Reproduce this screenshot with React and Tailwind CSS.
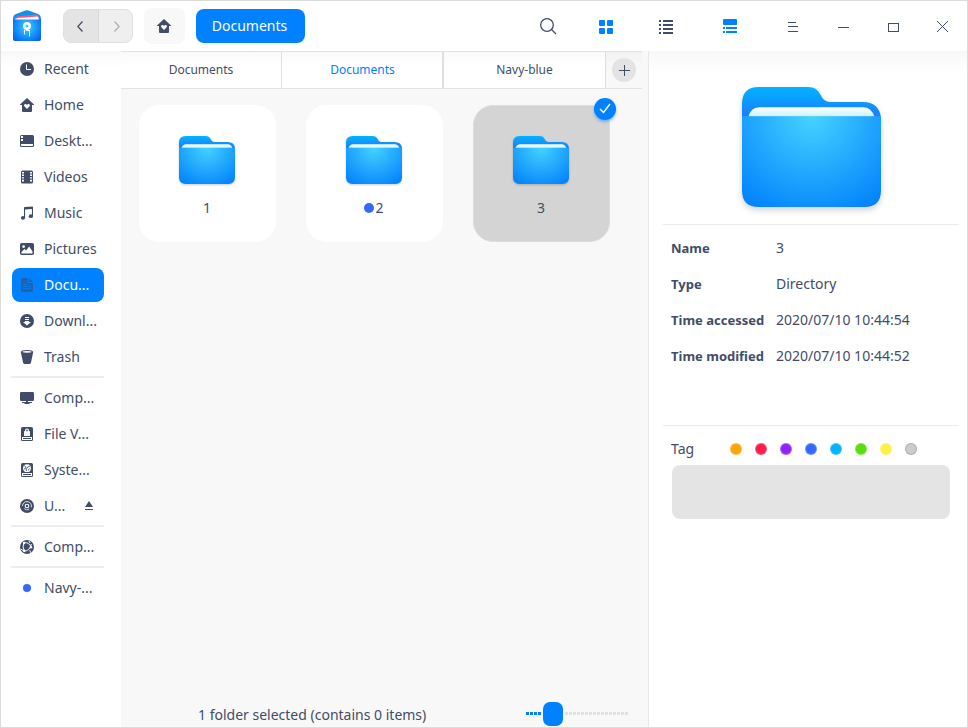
import React from "react";

const INK = "#414d68";

function Svg({ children, className = "" }) {
  return (
    <svg width="14" height="14" viewBox="0 0 14 14" fill={INK} className={`block shrink-0 ${className}`}>
      {children}
    </svg>
  );
}

const HomeShape = () => (
  <>
    <path d="M7 0 L14 6.6 V7 H12 V13 Q12 14 11 14 H3 Q2 14 2 13 V7 H0 V6.6 Z" />
    <path
      fill="#fff"
      d="M7 11 L4.6 8.6 C3.5 7.3 4.3 6 5.4 6 C6.2 6 6.7 6.4 7 6.9 C7.3 6.4 7.8 6 8.6 6 C9.7 6 10.5 7.3 9.4 8.6 Z"
    />
  </>
);

const icons = {
  recent: (
    <Svg>
      <circle cx="7" cy="7" r="7" />
      <path d="M6.5 2.5 V7.5 H11" stroke="#fff" fill="none" />
    </Svg>
  ),
  home: (
    <Svg>
      <HomeShape />
    </Svg>
  ),
  desktop: (
    <Svg>
      <rect x="0" y="1" width="14" height="12" rx="1.6" />
      <path fill="#fff" d="M1 2h2v2H1zM1 5h2v2H1zM1 10h12v1.2q0 .8-.8.8H1.8q-.8 0-.8-.8z" />
    </Svg>
  ),
  videos: (
    <Svg>
      <rect x="1" y="0.5" width="12" height="13" rx="1.6" />
      <path
        fill="#fff"
        d="M2 2h2v1.400H2zM2 4.600h2V6H2zM2 7.200h2v1.400H2zM2 9.800h2v1.800H2zM10 2h2v1.400h-2zM10 4.600h2V6h-2zM10 7.200h2v1.400h-2zM10 9.800h2v1.800h-2z"
      />
    </Svg>
  ),
  music: (
    <Svg>
      <path d="M4 1.8 Q4 1.1 4.7 1 L12.4 0.4 Q13 0.4 13 1 V10 H11.9 V3 L5.1 3.6 V12 H4 Z" />
      <ellipse cx="3" cy="11.8" rx="2.1" ry="1.9" />
      <ellipse cx="10.9" cy="10.2" rx="2.1" ry="1.9" />
    </Svg>
  ),
  pictures: (
    <Svg>
      <rect x="0" y="1" width="14" height="12" rx="1.8" />
      <path fill="#fff" d="M1.5 11.5 V10 L4.5 7 L6 8.5 L9.2 4.4 L12.5 9.5 V11.5 Z" />
      <circle cx="3.6" cy="4.6" r="1.4" fill="#fff" />
    </Svg>
  ),
  documents: (
    <Svg className="opacity-60">
      <path d="M2.5 0 H8 V5 H13 V12.5 Q13 14 11.5 14 H2.5 Q1 14 1 12.5 V1.5 Q1 0 2.5 0 Z M9 0 L13 4 H9 Z" />
      <path d="M3 6.5h4.500M3 8.500h8M3 10.500h8" stroke="#0081ff" strokeWidth=".8" />
    </Svg>
  ),
  downloads: (
    <Svg>
      <circle cx="7" cy="7" r="7" />
      <path fill="#fff" d="M5 3h4v1H5zM5 5h4v1H5zM5 7h4v1h2L7 11.500 3 8h2z" />
    </Svg>
  ),
  trash: (
    <Svg>
      <path d="M0.8 2 Q1 0 7 0 Q13 0 13.2 2 L11 12.4 Q10.7 14 9 14 H5 Q3.3 14 3 12.4 Z" />
      <path fill="#fff" d="M2.3 2 Q3 1 7 1 Q11 1 11.7 2 Q11 2.800 7 2.800 Q3 2.800 2.3 2 Z" />
    </Svg>
  ),
  computer: (
    <Svg>
      <rect x="0" y="1" width="14" height="9" rx="1.2" />
      <path d="M6 10h2v1H6zM2 11h10v1H2zM4.500 12h5v1h-5z" />
      <path d="M0.500 10.500H6M8 10.500h5.500" stroke="#fff" strokeWidth=".8" />
    </Svg>
  ),
  vault: (
    <Svg>
      <rect x="1" y="0" width="12" height="14" rx="1.6" />
      <path fill="#fff" d="M4 4.300h1V3.400a2 2 0 0 1 4 0v.9h1V9H4zM2 10h10v3H2z" />
      <path d="M3 11h8v1H3z" />
      <path d="M6.200 4.300v-.9a.8.8 0 0 1 1.600 0v.9z" />
    </Svg>
  ),
  disk: (
    <Svg>
      <rect x="1" y="0" width="12" height="14" rx="1.6" />
      <circle cx="7" cy="5.2" r="3.9" fill="#fff" />
      <path
        d="M4.200 2.600 Q6.800 3.600 6.400 8M7 5.200 Q8 3.200 9.900 3.100M4 6.200 L5.800 4.800M8.200 7.500 L9.300 5.500"
        stroke={INK}
        strokeWidth=".9"
        fill="none"
      />
      <path fill="#fff" d="M2 10h10v3H2z" />
      <path d="M3 11h8v1H3z" />
    </Svg>
  ),
  disc: (
    <Svg>
      <circle cx="7" cy="7" r="7" />
      <circle cx="7" cy="7" r="1.800" fill="none" stroke="#fff" strokeWidth="1.100" />
      <path
        d="M2.500 7A4.500 4.500 0 0 1 7 2.500A4.500 4.500 0 0 1 11.300 8.300M4.300 9.600A3.700 3.700 0 0 0 9.300 10"
        fill="none"
        stroke="#fff"
        strokeWidth=".8"
      />
    </Svg>
  ),
  network: (
    <Svg>
      <circle cx="7" cy="7" r="7" />
      <path
        d="M4.2 1.8 Q1.5 7 4.8 12M4.2 2.8 Q9 1.8 11.2 7.5M4 11 Q9.5 11.5 11.4 4M9 0.8 L10 3M0.8 9.2 L3.8 10.6M9.8 10.3 L10.7 12.7"
        fill="none"
        stroke="#fff"
        strokeWidth="1"
      />
      <circle cx="4" cy="3" r="1.2" fill="#fff" />
      <circle cx="4.1" cy="10.8" r="1.2" fill="#fff" />
      <circle cx="11" cy="7.2" r="1.2" fill="#fff" />
    </Svg>
  ),
  tag: (
    <Svg>
      <circle cx="7" cy="7" r="3.8" fill="#3468ff" stroke="#2b5ae6" strokeWidth=".6" />
    </Svg>
  ),
};

const groups = [
  [
    ["recent", "Recent"],
    ["home", "Home"],
    ["desktop", "Deskt..."],
    ["videos", "Videos"],
    ["music", "Music"],
    ["pictures", "Pictures"],
    ["documents", "Docu..."],
    ["downloads", "Downl..."],
    ["trash", "Trash"],
  ],
  [
    ["computer", "Comp..."],
    ["vault", "File V..."],
    ["disk", "Syste..."],
    ["disc", "U..."],
  ],
  [["network", "Comp..."]],
  [["tag", "Navy-..."]],
];

function SidebarItem({ icon, label }) {
  const active = icon === "documents";
  return (
    <li className="py-px pl-[11px]">
      <div
        className={`flex h-[34px] w-[92px] items-center rounded-lg pl-2 ${active ? "bg-[#0081ff] text-white" : ""}`}
      >
        {icons[icon]}
        <span className="ml-[10px] whitespace-nowrap">{label}</span>
        {icon === "disc" && (
          <svg width="8" height="9" viewBox="0 0 8 9" fill={INK} className="mr-[11px] mb-px ml-auto block">
            <path d="M4 0 L8 6 H0 Z M0 8h8v1H0z" />
          </svg>
        )}
      </div>
    </li>
  );
}

function Sidebar() {
  return (
    <aside className="w-[120px] shrink-0 bg-[linear-gradient(#f8f8f8,#ffffff_16px)]">
      {groups.map((items, i) => (
        <React.Fragment key={i}>
          {i > 0 && (
            <div className="h-[5px] pt-px">
              <div className="ml-[10px] h-[2px] w-[93px] bg-[#ededed]" />
            </div>
          )}
          <ul>
            {items.map(([icon, label]) => (
              <SidebarItem key={icon} icon={icon} label={label} />
            ))}
          </ul>
        </React.Fragment>
      ))}
    </aside>
  );
}

function Folder({ id, large = false }) {
  return (
    <svg
      width={large ? 139 : 56}
      height={large ? 120 : 48}
      viewBox="0 0 140 121"
      preserveAspectRatio="none"
      className={
        large
          ? "block overflow-visible drop-shadow-[0_3px_3px_rgba(0,0,0,0.18)]"
          : "block overflow-visible drop-shadow-[0_1px_1px_rgba(0,0,0,0.2)]"
      }
    >
      <defs>
        <linearGradient id={`${id}-back`} x1="0" y1="0" x2="0" y2="30" gradientUnits="userSpaceOnUse">
          <stop offset="0" stopColor="#00b4ff" />
          <stop offset="1" stopColor="#1c7cff" />
        </linearGradient>
        <linearGradient id={`${id}-paper`} x1="0" y1="0" x2="0" y2="1">
          <stop offset="0" stopColor="#fff" />
          <stop offset="1" stopColor="#c8f1ff" />
        </linearGradient>
        <radialGradient id={`${id}-front`} cx="70" cy="29" r="112" gradientUnits="userSpaceOnUse">
          <stop offset="0" stopColor="#45d3ff" />
          <stop offset="1" stopColor="#0080fc" />
        </radialGradient>
      </defs>
      <path
        fill={`url(#${id}-back)`}
        d="M0 17 Q0 0 17 0 H67 Q75 0 79 7.500 Q82 15 89 15 H122 Q138 15 140 31 V60 H0 Z"
      />
      <path fill={`url(#${id}-paper)`} d="M6.500 30 Q9 20.500 18 20.500 H122 Q130 20.500 133.500 30 Z" />
      <path fill={`url(#${id}-front)`} d="M0 29.500 H140 V104 Q140 121 123 121 H17 Q0 121 0 104 Z" />
    </svg>
  );
}

function Header() {
  return (
    <header className="flex h-[50px] shrink-0 items-center bg-white pl-3">
      <svg width="28" height="32" viewBox="0 0 28 32" className="block">
        <defs>
          <radialGradient id="app-front" cx="14" cy="17" r="20" gradientUnits="userSpaceOnUse">
            <stop offset="0" stopColor="#3ed5ff" />
            <stop offset="0.55" stopColor="#148cff" />
            <stop offset="1" stopColor="#0050ef" />
          </radialGradient>
        </defs>
        <path fill="#0795ee" d="M0 9 Q0 5 3 4 L11 1 Q14 -0.500 17 1 L25 4 Q28 5 28 9 V14 H0 Z" />
        <path fill="#ff5277" d="M2 8.500 Q3 6 6 6 L24 4.500 Q25.500 5 26 9 H2 Z" />
        <path fill="#fff" d="M2 9.500 Q2 8.500 5 8 L25 6.500 L26 10 H2 Z" />
        <path fill="url(#app-front)" d="M0 9.500 H28 V29 Q28 31 26 31 H2 Q0 31 0 29 Z" />
        <circle cx="14" cy="16" r="2.700" fill="none" stroke="#fff" strokeWidth="2.500" />
        <path d="M11.500 20v4.500M16.500 20v6.500M13 20.500h3.500" stroke="#fff" strokeWidth=".9" fill="none" />
      </svg>
      <div className="ml-[22px] flex h-[34px] w-[70px] overflow-hidden rounded-lg border border-[#dfdfdf] bg-[#efefef]">
        <button className="flex w-[35px] items-center justify-center border-r border-[#dadada] bg-[#e4e4e4] pr-[3px]">
          <svg width="6" height="11" viewBox="0 0 6 11" fill="none" stroke={INK} strokeWidth="1.300">
            <path d="M5.500 .5 L.8 5.500 L5.500 10.500" />
          </svg>
        </button>
        <button className="flex flex-1 items-center justify-center pl-[2px]">
          <svg width="6" height="11" viewBox="0 0 6 11" fill="none" stroke="#aaafba" strokeWidth="1.300">
            <path d="M.5 .5 L5.200 5.500 L.5 10.500" />
          </svg>
        </button>
      </div>
      <button className="ml-[11px] flex h-9 w-[41px] items-center justify-center rounded-lg bg-[#f8f8f8] pr-px">
        <Svg>
          <HomeShape />
        </Svg>
      </button>
      <button className="ml-[11px] h-[34px] w-[109px] rounded-lg bg-[#0081ff] pr-[2px] text-center text-white">
        Documents
      </button>
      <div className="ml-[235px] flex items-center">
        <svg width="17" height="17" viewBox="0 0 17 17" fill="none" stroke={INK} strokeWidth="1.300" className="block">
          <circle cx="7" cy="7" r="6.300" />
          <path d="M11.500 11.500 L16 16" />
        </svg>
        <svg width="14" height="14" viewBox="0 0 14 14" fill="#0081ff" className="mt-[2px] ml-[42px] block">
          <rect width="6" height="6" rx="1" />
          <rect x="8" width="6" height="6" rx="1" />
          <rect y="8" width="6" height="6" rx="1" />
          <rect x="8" y="8" width="6" height="6" rx="1" />
        </svg>
        <svg width="14" height="14" viewBox="0 0 14 14" fill={INK} className="mt-[2px] ml-[46px] block">
          <path d="M0 0h2v2H0zM4 0h10v2H4zM0 4h2v2H0zM4 4h10v2H4zM0 8h2v2H0zM4 8h10v2H4zM0 12h2v2H0zM4 12h10v2H4z" />
        </svg>
        <svg width="14" height="14" viewBox="0 0 14 14" fill="#0081ff" className="ml-[50px] block">
          <rect width="14" height="6" rx="1" />
          <path d="M0 8h2v2H0zM3 8h11v2H3zM0 12h2v2H0zM3 12h11v2H3z" />
        </svg>
        <svg width="10" height="10" viewBox="0 0 10 10" fill={INK} className="mt-[2px] ml-[51px] block">
          <path d="M0 0h8v1H0zM0 4h10v1H0zM0 9h10v1H0z" />
        </svg>
        <div className="mt-[2px] ml-[40px] h-px w-[11px] bg-[#414d68]" />
        <div className="mt-[2px] ml-[39px] h-[9px] w-[11px] border border-[#414d68]" />
        <svg
          width="11"
          height="11"
          viewBox="0 0 11 11"
          stroke={INK}
          strokeWidth="1"
          fill="none"
          className="mt-px ml-[38px] block"
        >
          <path d="M0 0 L11 11 M11 0 L0 11" />
        </svg>
      </div>
    </header>
  );
}

function Tabs() {
  const tab = "flex h-full items-center justify-center border-r border-[#dfdfdf] bg-[linear-gradient(#fafafa,#ffffff_15px)] pb-px";
  return (
    <div className="flex h-[38px] w-[521px] shrink-0 items-center border-y border-[#e2e2e2] bg-[linear-gradient(#f2f2f2,#f8f8f8_15px)] text-[12px]">
      <div className={`${tab} w-[161px]`}>Documents</div>
      <div className={`${tab} w-[161px] pl-px text-[#0081ff]`}>Documents</div>
      <div className={`${tab} w-[163px] border-l`}>Navy-blue</div>
      <button className="ml-[6px] flex h-6 w-6 items-center justify-center rounded-full bg-[#e3e3e3]">
        <svg width="11" height="11" viewBox="0 0 11 11" fill={INK}>
          <path d="M5 0h1v11H5zM0 5h11v1H0z" />
        </svg>
      </button>
    </div>
  );
}

function Card({ name, dot, selected }) {
  return (
    <div
      className={`relative flex h-[137px] w-[137px] flex-col items-center rounded-[20px] border ${
        selected ? "border-[#dddddd] bg-[#d4d4d4]" : "border-white bg-white"
      } pt-[30px]`}
    >
      <Folder id={`folder-${name}`} />
      <div className="mt-[14px] flex h-5 items-center">
        {dot && <span className="mr-[1px] h-[10px] w-[10px] rounded-full bg-[#3468ff]" />}
        <span>{name}</span>
      </div>
      {selected && (
        <div className="absolute -top-[8px] -right-[7px] flex h-[22px] w-[22px] items-center justify-center rounded-full bg-[#0081ff] shadow-[0_2px_3px_rgba(0,129,255,0.45)]">
          <svg width="12" height="11" viewBox="0 0 12 11" fill="none" stroke="#fff" strokeWidth="1.400">
            <path d="M1 6 L4.500 9.500 L11 1" />
          </svg>
        </div>
      )}
    </div>
  );
}

function StatusBar() {
  return (
    <footer className="mt-auto flex h-[25px] shrink-0 items-center">
      <span className="ml-[77px] w-[328px] whitespace-nowrap">1 folder selected (contains 0 items)</span>
      <div className="flex items-center pb-[2px]">
        <div className="flex gap-px">
          {Array.from({ length: 4 }, (_, i) => (
            <i key={i} className="h-[3px] w-[3px] bg-[#0081ff]" />
          ))}
        </div>
        <div className="ml-[2px] h-6 w-5 rounded-[7px] bg-[#0081ff]" />
        <div className="ml-[2px] flex gap-px">
          {Array.from({ length: 16 }, (_, i) => (
            <i key={i} className="h-[3px] w-[3px] bg-[#e1e1e1]" />
          ))}
        </div>
      </div>
    </footer>
  );
}

const details = [
  ["Name", "3"],
  ["Type", "Directory"],
  ["Time accessed", "2020/07/10 10:44:54"],
  ["Time modified", "2020/07/10 10:44:52"],
];

const tagColors = [
  "bg-[#ffa503]",
  "bg-[#ff1c49]",
  "bg-[#9023fc]",
  "bg-[#3468ff]",
  "bg-[#00b5ff]",
  "bg-[#58df0a]",
  "bg-[#fef144]",
  "bg-[#cccccc]",
];

function Details() {
  return (
    <aside className="w-[319px] shrink-0 border-l border-[#e8e8e8] bg-[linear-gradient(#f8f8f8,#ffffff_22px)]">
      <div className="flex h-[173px] pt-[36px] pl-[92.5px]">
        <Folder id="preview" large />
      </div>
      <div className="ml-[14px] h-[202px] w-[296px] border-y border-[#ebebeb] pt-[5px] pl-2">
        <dl>
          {details.map(([key, value]) => (
            <div key={key} className="flex h-9 items-center">
              <dt className="w-[105px] text-[13px] font-bold">{key}</dt>
              <dd>{value}</dd>
            </div>
          ))}
        </dl>
      </div>
      <div className="flex h-[39px] items-center pt-[7px] pl-[22px]">
        <span className="w-[59px]">Tag</span>
        <div className="flex gap-[13px]">
          {tagColors.map((c) => (
            <span
              key={c}
              className={`h-3 w-3 rounded-full border ${c === "bg-[#cccccc]" ? "border-black/15" : "border-white/25"} ${c}`}
            />
          ))}
        </div>
      </div>
      <div className="ml-[23px] h-[54px] w-[278px] rounded-lg bg-[#e4e4e4]" />
    </aside>
  );
}

export default function App() {
  return (
    <div className="flex h-[728px] w-[968px] flex-col overflow-hidden border border-[#dcdcdc] bg-white font-['Noto_Sans',sans-serif] text-[14px] leading-5 text-[#414d68]">
      <Header />
      <div className="flex min-h-0 flex-1">
        <Sidebar />
        <main className="flex w-[527px] shrink-0 flex-col bg-[#f8f8f8]">
          <Tabs />
          <div className="flex gap-[30px] pt-[15.5px] pl-[17.5px]">
            <Card name="1" />
            <Card name="2" dot />
            <Card name="3" selected />
          </div>
          <StatusBar />
        </main>
        <Details />
      </div>
    </div>
  );
}
